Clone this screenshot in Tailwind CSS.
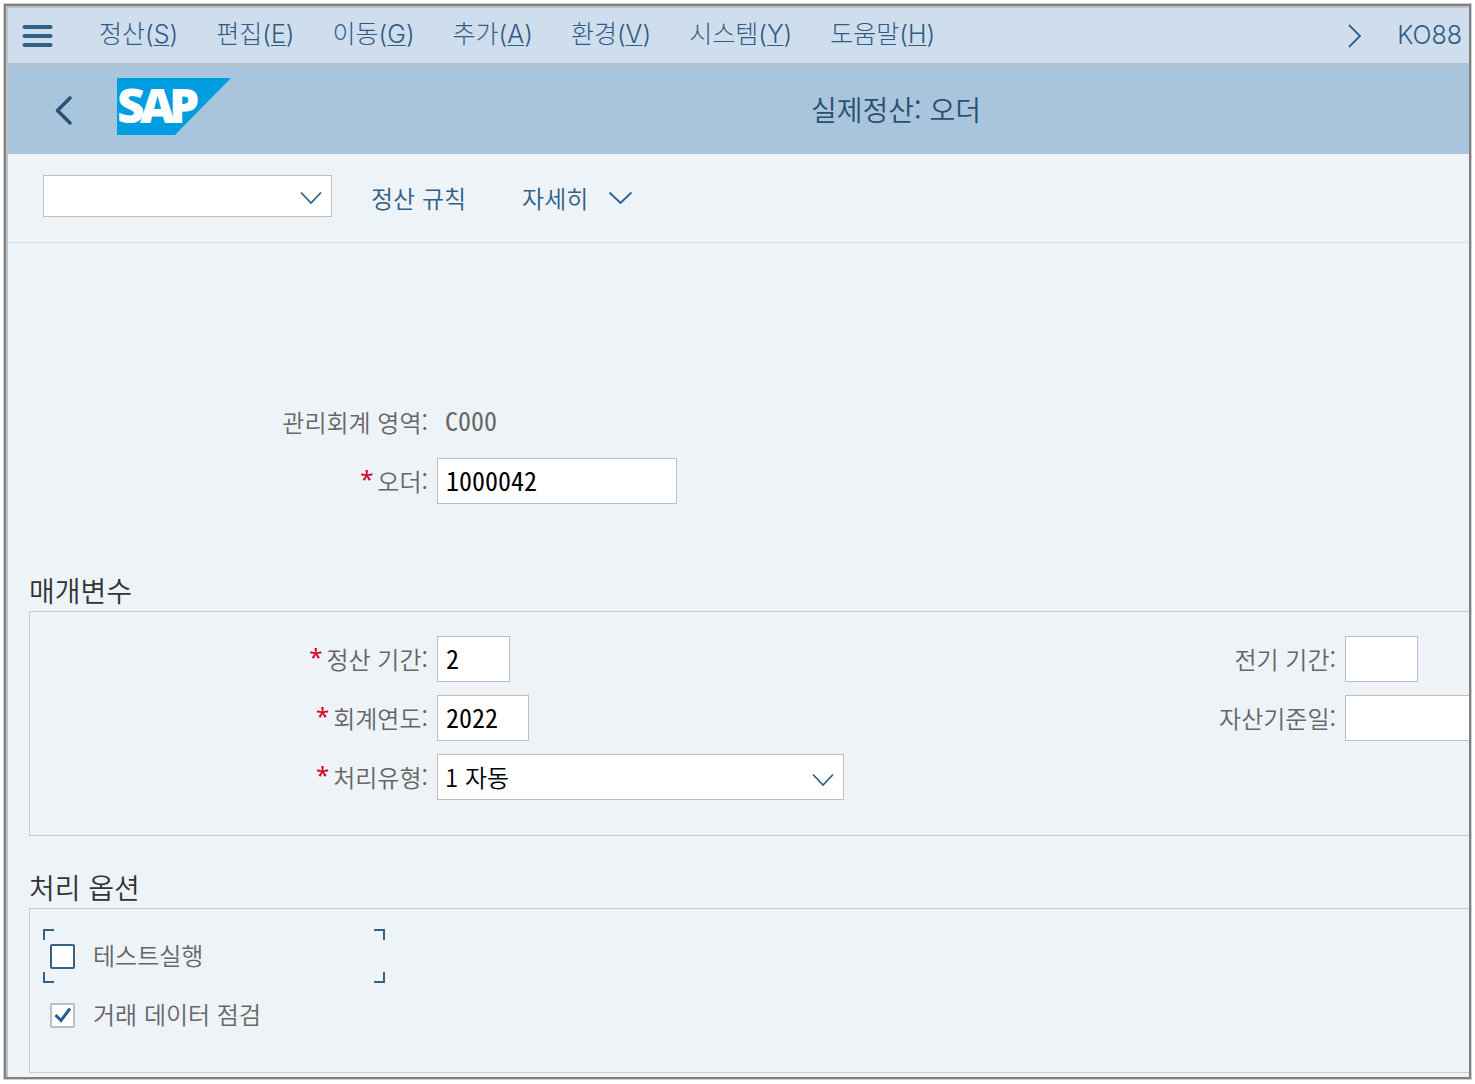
<!DOCTYPE html>
<html lang="ko">
<head>
<meta charset="utf-8">
<meta name="viewport" content="width=device-width, initial-scale=1">
<title>실제정산: 오더</title>
<script src="https://cdn.jsdelivr.net/npm/@tailwindcss/browser@4"></script>
</head>
<body class="bg-white p-1 font-['Noto_Sans_CJK_KR',sans-serif] text-2xl font-[350] text-[#666]">
<div class="overflow-hidden border-2 border-[#808080] bg-[#eef3f8] outline outline-[#d0cece]">
<div class="border-t-2 border-l-2 border-[#c0c0c0]">

  <nav class="flex h-[57px] items-center border-b-2 border-[#bfbfbf] bg-[#cfdeed] pr-[7px] pl-[14px] font-['Inter','Noto_Sans_CJK_KR',sans-serif] text-[25px] font-light whitespace-nowrap text-[#2f5c84]">
    <button type="button" aria-label="메뉴" class="mr-[46px]">
      <svg class="block h-6 w-[31px]" viewBox="0 0 31 24" fill="none" stroke="#2f6088" stroke-width="4" stroke-linecap="round"><path d="M2.500 3h26M2.500 12h26M2.500 21h26"/></svg>
    </button>
    <div class="flex gap-[38px] pb-[2px]">
      <a href="#">정산(<span class="underline decoration-1 underline-offset-2">S</span>)</a>
      <a href="#">편집(<span class="underline decoration-1 underline-offset-2">E</span>)</a>
      <a href="#">이동(<span class="underline decoration-1 underline-offset-2">G</span>)</a>
      <a href="#">추가(<span class="underline decoration-1 underline-offset-2">A</span>)</a>
      <a href="#">환경(<span class="underline decoration-1 underline-offset-2">V</span>)</a>
      <a href="#">시스템(<span class="underline decoration-1 underline-offset-2">Y</span>)</a>
      <a href="#">도움말(<span class="underline decoration-1 underline-offset-2">H</span>)</a>
    </div>
    <button type="button" aria-label="다음" class="mr-9 ml-auto">
      <svg class="block h-6 w-4" viewBox="0 0 16 24" fill="none" stroke="#2f6088" stroke-width="1.800"><path d="M4 1l11 11L4 23"/></svg>
    </button>
    <span>KO88</span>
  </nav>

  <header class="flex h-[89px] items-center bg-[#a9c5de] pl-[46px] text-[28px] text-[#2a4f71]">
    <button type="button" aria-label="뒤로" class="mr-[43px]">
      <svg class="block h-8 w-5" viewBox="0 0 20 32" fill="none" stroke="#27537a" stroke-width="3.600" stroke-linecap="round" stroke-linejoin="round"><path d="M16 4L3.500 16.500L16 29"/></svg>
    </button>
    <svg class="mb-[6px] h-[57px] w-[114px] overflow-visible" viewBox="0 0 114 57" role="img" aria-label="SAP">
      <path d="M0 0H114L58 57H0Z" fill="#009ee0"/>
      <text y="45" x="0 23 52" font-family="Noto Sans, Open Sans, sans-serif" font-weight="900" font-size="48" fill="#fff">SAP</text>
    </svg>
    <h1 class="ml-[580px] whitespace-nowrap">실제정산: 오더</h1>
  </header>

  <div class="flex h-[89px] items-center border-b border-[#d3e2f0] pb-1 pl-[35px] text-[#2f6088]">
    <div class="relative mr-[39px] w-[289px]">
      <select aria-label="명령" class="block h-[42px] w-full appearance-none border border-[#bfbfbf] bg-white px-2"><option></option></select>
      <svg class="pointer-events-none absolute top-4 right-[9px] h-[14px] w-6" viewBox="0 0 24 14" fill="none" stroke="#2f6088" stroke-width="1.800"><path d="M2 1.500L12 12L22 1.500"/></svg>
    </div>
    <button type="button" class="mr-14 pt-[3px]">정산 규칙</button>
    <button type="button" class="flex items-center gap-5 pt-[3px]">자세히
      <svg class="h-[14px] w-6" viewBox="0 0 24 14" fill="none" stroke="#2f6088" stroke-width="1.800"><path d="M1.500 1.500L12.500 12L23.500 1.500"/></svg>
    </button>
  </div>

  <main class="pt-[156px] pb-1 pl-[21px]">
    <div class="flex flex-col gap-[13px]">
      <div class="flex h-[46px] items-center gap-[9px]">
        <span class="w-[399px] pb-px text-right">관리회계 영역:</span>
        <span class="pb-[3px] pl-2 font-['Noto_Sans_Mono_CJK_KR',monospace] text-[26px]">C000</span>
      </div>
      <div class="flex h-[46px] items-center gap-[9px]">
        <label for="order" class="w-[399px] pb-px text-right"><span class="mr-1 align-[3px] font-['Noto_Sans'] leading-none font-normal text-[#d6002a]">*</span>오더:</label>
        <input id="order" value="1000042" class="h-full w-60 border border-[#bfbfbf] bg-white px-2 pb-1 font-['Noto_Sans_Mono_CJK_KR',monospace] text-[26px] text-black">
      </div>
    </div>

    <section class="mt-[71px]">
      <h2 class="h-9 text-[28px] leading-[30px] text-[#333]">매개변수</h2>
      <div class="flex border border-r-0 border-[#c8ccd0] pt-6 pb-[35px]">
        <div class="flex w-[908px] shrink-0 flex-col gap-[13px]">
          <div class="flex h-[46px] items-center gap-[9px]">
            <label for="period" class="w-[398px] pb-px text-right"><span class="mr-1 align-[3px] font-['Noto_Sans'] leading-none font-normal text-[#d6002a]">*</span>정산 기간:</label>
            <input id="period" value="2" class="h-full w-[73px] border border-[#bfbfbf] bg-white px-2 pb-1 font-['Noto_Sans_Mono_CJK_KR',monospace] text-[26px] text-black">
          </div>
          <div class="flex h-[46px] items-center gap-[9px]">
            <label for="year" class="w-[398px] pb-px text-right"><span class="mr-1 align-[3px] font-['Noto_Sans'] leading-none font-normal text-[#d6002a]">*</span>회계연도:</label>
            <input id="year" value="2022" class="h-full w-[92px] border border-[#bfbfbf] bg-white px-2 pb-1 font-['Noto_Sans_Mono_CJK_KR',monospace] text-[26px] text-black">
          </div>
          <div class="flex h-[46px] items-center gap-[9px]">
            <label for="type" class="w-[398px] pb-px text-right"><span class="mr-1 align-[3px] font-['Noto_Sans'] leading-none font-normal text-[#d6002a]">*</span>처리유형:</label>
            <div class="relative h-full w-[407px]">
              <select id="type" class="h-full w-full appearance-none border border-[#bfbfbf] bg-white px-[7px] text-black"><option>1 자동</option></select>
              <svg class="pointer-events-none absolute top-[19px] right-[9px] h-[14px] w-6" viewBox="0 0 24 14" fill="none" stroke="#2f6088" stroke-width="1.800"><path d="M2 1.500L12 12L22 1.500"/></svg>
            </div>
          </div>
        </div>
        <div class="flex min-w-0 flex-1 flex-col gap-[13px]">
          <div class="flex h-[46px] items-center gap-[9px]">
            <label for="posting" class="w-[398px] shrink-0 pb-px text-right">전기 기간:</label>
            <input id="posting" class="h-full w-[73px] shrink-0 border border-[#bfbfbf] bg-white px-2 text-black">
          </div>
          <div class="flex h-[46px] items-center gap-[9px]">
            <label for="asset" class="w-[398px] shrink-0 pb-px text-right">자산기준일:</label>
            <input id="asset" class="h-full min-w-0 flex-1 border border-r-0 border-[#bfbfbf] bg-white px-2 text-black">
          </div>
        </div>
      </div>
    </section>

    <section class="mt-9">
      <h2 class="h-9 text-[28px] leading-[30px] text-[#333]">처리 옵션</h2>
      <div class="flex flex-col items-start gap-[5px] border border-r-0 border-[#c8ccd0] pt-5 pb-[30px] pl-[13px]">
        <label class="relative flex h-[54px] w-[342px] items-center gap-[18px] pl-[7px]">
          <span class="absolute top-0 left-0 h-[11px] w-[11px] border-t-2 border-l-2 border-[#346187]"></span>
          <span class="absolute top-0 right-0 h-[11px] w-[11px] border-t-2 border-r-2 border-[#346187]"></span>
          <span class="absolute bottom-0 left-0 h-[11px] w-[11px] border-b-2 border-l-2 border-[#346187]"></span>
          <span class="absolute right-0 bottom-0 h-[11px] w-[11px] border-r-2 border-b-2 border-[#346187]"></span>
          <input type="checkbox" class="h-[25px] w-[25px] appearance-none rounded-[2px] border-2 border-[#346187] bg-white">
          <span class="pb-[2px]">테스트실행</span>
        </label>
        <label class="relative flex h-[54px] items-center gap-[18px] pl-[7px]">
          <input type="checkbox" checked class="h-[25px] w-[25px] appearance-none rounded-[2px] border-2 border-[#bfbfbf] bg-white">
          <svg class="pointer-events-none absolute left-[11px] h-4 w-[18px]" viewBox="0 0 18 16" fill="none" stroke="#235f93" stroke-width="3"><path d="M1.500 8L7 13.500L16 1.500"/></svg>
          <span class="pb-[2px]">거래 데이터 점검</span>
        </label>
      </div>
    </section>
  </main>
</div>
</div>
</body>
</html>
